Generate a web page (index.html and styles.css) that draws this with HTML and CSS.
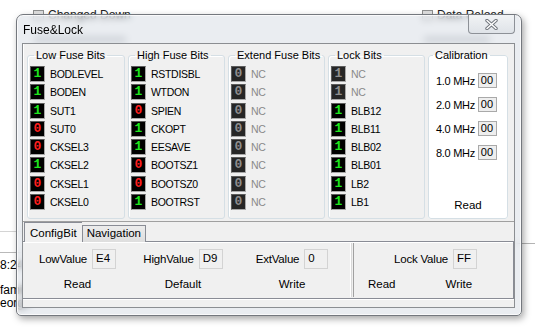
FILE: index.html
```html
<!DOCTYPE html>
<html lang="en">
<head>
    <meta charset="UTF-8">
    <meta name="viewport" content="width=device-width, initial-scale=1.0">
    <title>Fuse&amp;Lock</title>
    <link rel="stylesheet" href="styles.css">
</head>
<body>
    <div class="desk">
        <!-- main window behind the dialog -->
        <div class="bg-check bg-left"><span class="cb"></span>Changed Down</div>
        <div class="bg-check bg-right"><span class="cb"></span>Data Reload</div>
        <div class="smear smear-left"></div>
        <div class="smear smear-right"></div>
        <div class="bg-side">
            <div class="bg-box">
                <span class="bg-time">8:24</span>
                <span class="bg-log">family</span>
                <span class="bg-log">eorge</span>
            </div>
        </div>
        <div class="bg-rule"></div>

        <div class="window">
            <div class="titlebar">
                <span class="title">Fuse&amp;Lock</span>
                <button class="close" type="button">
                    <svg width="13" height="11" viewBox="0 0 13 11">
                        <path d="M2 1.5 L11 9.5 M11 1.5 L2 9.5" stroke="#70757c" stroke-width="3.4" stroke-linecap="round"/>
                        <path d="M2 1.5 L11 9.5 M11 1.5 L2 9.5" stroke="#fff" stroke-width="1.5" stroke-linecap="round"/>
                    </svg>
                </button>
            </div>
            <div class="client">
                <div class="bits-panel">
                    <fieldset class="group">
                        <legend>Low Fuse Bits</legend>
                        <div class="bit"><span class="led on">1</span><span class="name">BODLEVEL</span></div>
                        <div class="bit"><span class="led on">1</span><span class="name">BODEN</span></div>
                        <div class="bit"><span class="led on">1</span><span class="name">SUT1</span></div>
                        <div class="bit"><span class="led off">0</span><span class="name">SUT0</span></div>
                        <div class="bit"><span class="led off">0</span><span class="name">CKSEL3</span></div>
                        <div class="bit"><span class="led on">1</span><span class="name">CKSEL2</span></div>
                        <div class="bit"><span class="led off">0</span><span class="name">CKSEL1</span></div>
                        <div class="bit"><span class="led off">0</span><span class="name">CKSEL0</span></div>
                    </fieldset>
                    <fieldset class="group">
                        <legend>High Fuse Bits</legend>
                        <div class="bit"><span class="led on">1</span><span class="name">RSTDISBL</span></div>
                        <div class="bit"><span class="led on">1</span><span class="name">WTDON</span></div>
                        <div class="bit"><span class="led off">0</span><span class="name">SPIEN</span></div>
                        <div class="bit"><span class="led on">1</span><span class="name">CKOPT</span></div>
                        <div class="bit"><span class="led on">1</span><span class="name">EESAVE</span></div>
                        <div class="bit"><span class="led off">0</span><span class="name">BOOTSZ1</span></div>
                        <div class="bit"><span class="led off">0</span><span class="name">BOOTSZ0</span></div>
                        <div class="bit"><span class="led on">1</span><span class="name">BOOTRST</span></div>
                    </fieldset>
                    <fieldset class="group">
                        <legend>Extend Fuse Bits</legend>
                        <div class="bit"><span class="led na">0</span><span class="name na">NC</span></div>
                        <div class="bit"><span class="led na">0</span><span class="name na">NC</span></div>
                        <div class="bit"><span class="led na">0</span><span class="name na">NC</span></div>
                        <div class="bit"><span class="led na">0</span><span class="name na">NC</span></div>
                        <div class="bit"><span class="led na">0</span><span class="name na">NC</span></div>
                        <div class="bit"><span class="led na">0</span><span class="name na">NC</span></div>
                        <div class="bit"><span class="led na">0</span><span class="name na">NC</span></div>
                        <div class="bit"><span class="led na">0</span><span class="name na">NC</span></div>
                    </fieldset>
                    <fieldset class="group">
                        <legend>Lock Bits</legend>
                        <div class="bit"><span class="led na">1</span><span class="name na">NC</span></div>
                        <div class="bit"><span class="led na">1</span><span class="name na">NC</span></div>
                        <div class="bit"><span class="led on">1</span><span class="name">BLB12</span></div>
                        <div class="bit"><span class="led on">1</span><span class="name">BLB11</span></div>
                        <div class="bit"><span class="led on">1</span><span class="name">BLB02</span></div>
                        <div class="bit"><span class="led on">1</span><span class="name">BLB01</span></div>
                        <div class="bit"><span class="led on">1</span><span class="name">LB2</span></div>
                        <div class="bit"><span class="led on">1</span><span class="name">LB1</span></div>
                    </fieldset>
                    <fieldset class="group calib">
                        <legend>Calibration</legend>
                        <div class="calib-body">
                            <div class="freq"><span>1.0 MHz</span><span class="calib-val">00</span></div>
                            <div class="freq"><span>2.0 MHz</span><span class="calib-val">00</span></div>
                            <div class="freq"><span>4.0 MHz</span><span class="calib-val">00</span></div>
                            <div class="freq"><span>8.0 MHz</span><span class="calib-val">00</span></div>
                            <button class="flat calib-read" type="button">Read</button>
                        </div>
                    </fieldset>
                </div>

                <div class="tabs">
                    <span class="tab active">ConfigBit</span>
                    <span class="tab">Navigation</span>
                </div>
                <div class="tab-body">
                    <div class="fuse-values">
                        <div class="field-col c1">
                            <div class="field"><span>LowValue</span><span class="value">E4</span></div>
                            <button class="flat" type="button">Read</button>
                        </div>
                        <div class="field-col c2">
                            <div class="field"><span>HighValue</span><span class="value">D9</span></div>
                            <button class="flat" type="button">Default</button>
                        </div>
                        <div class="field-col c3">
                            <div class="field"><span>ExtValue</span><span class="value">0</span></div>
                            <button class="flat" type="button">Write</button>
                        </div>
                    </div>
                    <div class="sep"></div>
                    <div class="lock-values">
                        <div class="field lock-field"><span>Lock Value</span><span class="value">FF</span></div>
                        <div class="lock-actions">
                            <button class="flat" type="button">Read</button>
                            <button class="flat" type="button">Write</button>
                        </div>
                    </div>
                </div>
                <div class="status"></div>
            </div>
        </div>
    </div>
</body>
</html>
```

FILE: styles.css
```css
* {
    box-sizing: border-box;
}
body {
    margin: 0;
    width: 535px;
    height: 327px;
    overflow: hidden;
    background: #fff;
    font-family: 'Liberation Sans', Arial, sans-serif;
    font-size: 11px;
    color: #000;
}
.desk {
    position: relative;
    width: 535px;
    height: 327px;
}

/* background window */
.bg-check {
    position: absolute;
    top: 8px;
    display: flex;
    align-items: center;
    gap: 4px;
    font-size: 12px;
    color: #222;
}
.bg-left {
    left: 33px;
}
.bg-right {
    left: 422px;
}
.cb {
    width: 11px;
    height: 11px;
    border: 1px solid #8e8f8f;
    background: linear-gradient(#dcdcdc, #fafafa);
}
.smear {
    position: absolute;
    top: 37px;
    height: 5px;
    background: #8a8f96;
    filter: blur(2px);
    opacity: 0.6;
}
.smear-left {
    left: 34px;
    width: 92px;
}
.smear-right {
    left: 424px;
    width: 66px;
}
.bg-side {
    position: absolute;
    left: 0;
    top: 231px;
    width: 40px;
    height: 96px;
    border-top: 1px solid #d4d4d4;
}
.bg-box {
    margin-top: 20px;
    border-top: 1px solid #b9b9b9;
    display: flex;
    flex-direction: column;
    font-size: 12px;
    line-height: 13px;
}
.bg-time {
    margin: 6px 0 12px 0;
}
.bg-rule {
    position: absolute;
    left: 500px;
    top: 243px;
    width: 35px;
    border-top: 1px solid #b4b4b4;
}

/* dialog */
.window {
    position: absolute;
    left: 16px;
    top: 14px;
    width: 506px;
    height: 302px;
    display: flex;
    flex-direction: column;
    padding: 0 6px 7px 5px;
    background: rgba(214, 220, 227, 0.5);
    backdrop-filter: blur(3px);
    border: 1px solid #74787e;
    border-radius: 7px 7px 5px 5px;
    box-shadow: 2px 3px 7px rgba(0, 0, 0, 0.35), inset 0 0 0 1px rgba(255, 255, 255, 0.75);
}
.titlebar {
    height: 28px;
    display: flex;
    align-items: center;
    padding: 2px 0 0 1px;
}
.title {
    font-size: 12px;
    color: #000;
}
.close {
    align-self: flex-start;
    margin: -2px 0 0 auto;
    width: 47px;
    height: 19px;
    padding: 0;
    display: flex;
    align-items: center;
    justify-content: center;
    background: linear-gradient(#f1f3f5, #dfe3e8);
    border: 1px solid #8d9197;
    border-top: none;
    border-radius: 0 0 4px 4px;
}
.client {
    flex: 1;
    display: flex;
    flex-direction: column;
    background: #f0f0f0;
    border: 1px solid #8b8e92;
}

/* bits */
.bits-panel {
    height: 178px;
    display: flex;
    align-items: flex-start;
    gap: 3px;
    padding: 4px 0 0 4px;
    border-bottom: 1px solid #a0a0a0;
    box-shadow: inset 1px 0 0 #fff;
}
.group {
    margin: 0;
    width: 98px;
    height: 171px;
    padding: 4px 0 0 2px;
    border: 1px solid #d5dfe5;
    border-radius: 3px;
    box-shadow: inset 1px 1px 0 #fff;
}
.group + .group {
    width: 97px;
}
.group legend {
    margin-left: 4px;
    padding: 0 2px;
    font-size: 11px;
    line-height: 14px;
    white-space: nowrap;
    color: #000;
}
.bit {
    display: flex;
    align-items: center;
    gap: 5px;
    height: 16px;
    margin-bottom: 2.3px;
}
.led {
    width: 15px;
    height: 16px;
    background: #000;
    border: 1px solid;
    border-color: #5c5c5c #a8a8a8 #a8a8a8 #5c5c5c;
    font: bold 13px 'Liberation Mono', 'Courier New', monospace;
    line-height: 14px;
    text-align: center;
}
.led.on {
    color: #1ee61e;
}
.led.off {
    color: #ff1f1f;
}
.led.na {
    background: #262626;
    color: #8e8e8e;
}
.name {
    font-size: 10.5px;
    letter-spacing: -0.3px;
}
.name.na {
    color: #8a8a8a;
}
.group.calib {
    width: 80px;
    background: #fff;
    padding: 0;
}
.calib-body {
    height: 153px;
    display: flex;
    flex-direction: column;
    gap: 9px;
    padding: 11px 0 4px 7px;
}
.freq {
    display: flex;
    align-items: center;
    gap: 3px;
    height: 15px;
    font-size: 11px;
    letter-spacing: -0.3px;
}
.calib-val {
    width: 19px;
    height: 15px;
    padding-left: 2px;
    line-height: 13px;
    background: #eeeeee;
    border: 1px solid #a9a9a9;
    letter-spacing: 0;
}
.flat {
    padding: 0;
    border: none;
    background: none;
    font: 11.5px 'Liberation Sans', Arial, sans-serif;
    color: #000;
}
.calib-read {
    margin-top: auto;
    align-self: center;
    margin-left: -7px;
}

/* tabs */
.tabs {
    height: 20px;
    display: flex;
    align-items: flex-end;
    padding-left: 1px;
    margin-bottom: -1px;
    position: relative;
    z-index: 1;
}
.tab {
    height: 17px;
    padding: 0 4px;
    line-height: 15px;
    font-size: 11.5px;
    background: linear-gradient(#ececec, #dedede);
    border: 1px solid #898c95;
    border-bottom: none;
}
.tab.active {
    height: 20px;
    line-height: 21px;
    padding: 0 5px;
    background: #f0f0f0;
    border-right: none;
}
.tab-body {
    height: 58px;
    display: flex;
    border: 1px solid #898c95;
    border-width: 1px 1px 1px 0;
    box-shadow: inset 0 1px 0 #fff;
}
.fuse-values {
    width: 327px;
    display: flex;
    padding-top: 7px;
}
.field-col {
    display: flex;
    flex-direction: column;
    align-items: center;
    gap: 9px;
}
.c1 {
    width: 109px;
}
.c2 {
    width: 102px;
}
.c3 {
    width: 116px;
}
.field {
    display: flex;
    align-items: center;
    gap: 5px;
    height: 20px;
    font-size: 11.5px;
    letter-spacing: -0.2px;
}
.value {
    width: 24px;
    height: 20px;
    padding-left: 3px;
    line-height: 17px;
    border: 1px solid #d3d3d3;
    background: #f0f0f0;
    letter-spacing: 0;
}
.sep {
    width: 4px;
    margin: 1px 0;
    border-left: 1px solid #fff;
    border-right: 1px solid #a0a0a0;
    box-shadow: inset 1px 0 0 #d8d8d8;
}
.lock-values {
    flex: 1;
    display: flex;
    flex-direction: column;
    gap: 9px;
    padding-top: 7px;
}
.lock-field {
    padding-left: 40px;
}
.lock-actions {
    display: flex;
    gap: 50px;
    padding-left: 14px;
}
.status {
    flex: 1;
    border-top: 1px solid #fff;
}
```
